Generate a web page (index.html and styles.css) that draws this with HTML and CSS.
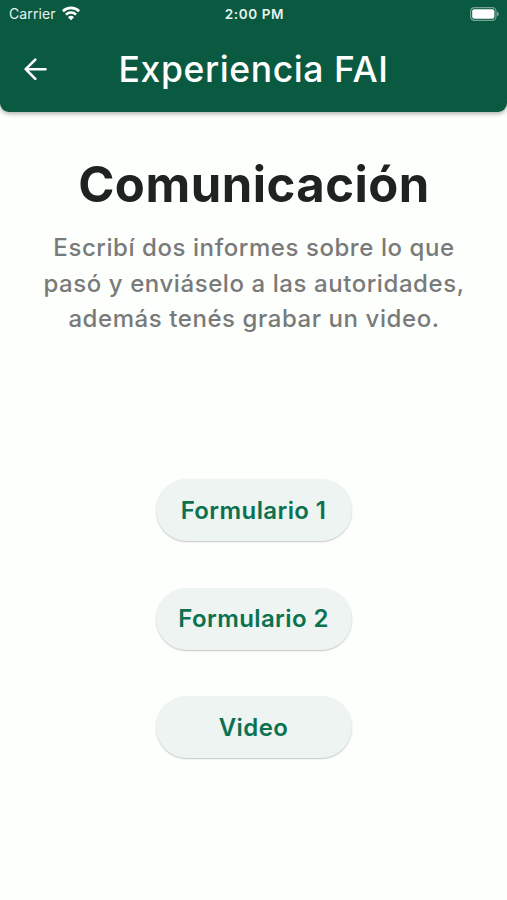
FILE: index.html
```html
<!DOCTYPE html>
<html lang="es">
<head>
    <meta charset="UTF-8">
    <meta name="viewport" content="width=device-width, initial-scale=1.0">
    <title>Experiencia FAI</title>
    <link rel="stylesheet" href="styles.css">
</head>
<body>
    <header class="header">
        <div class="status">
            <div class="carrier">
                <span>Carrier</span>
                <svg class="wifi" viewBox="0 0 20 15" width="20" height="15">
                    <path d="M1.9 5.2a11.7 11.7 0 0 1 16.2 0" fill="none" stroke="#fff" stroke-width="2.7"/>
                    <path d="M4.9 8.6a7.3 7.3 0 0 1 10.2 0" fill="none" stroke="#fff" stroke-width="2.5"/>
                    <path d="M10 14.2l-3-3a4.3 4.3 0 0 1 6 0z" fill="#fff"/>
                </svg>
            </div>
            <div class="time">2:00 PM</div>
            <svg class="battery" viewBox="0 0 30 14" width="30" height="14">
                <rect x="0.6" y="0.6" width="25.4" height="12.8" rx="3.8" fill="none" stroke="#fff" stroke-opacity="0.45" stroke-width="1.2"/>
                <rect x="2.2" y="2.2" width="22.2" height="9.6" rx="2" fill="#fff"/>
                <path d="M27.2 4.8c2.2.7 2.2 3.7 0 4.4z" fill="#fff" fill-opacity="0.5"/>
            </svg>
        </div>
        <div class="bar">
            <svg class="back" viewBox="0 0 23 23" width="23" height="23">
                <path d="M21.5 11.2H2M11.3 1.6L1.7 11.2l9.6 9.6" fill="none" stroke="#fff" stroke-width="2.6" stroke-linecap="round" stroke-linejoin="round"/>
            </svg>
            <div class="title">Experiencia FAI</div>
        </div>
    </header>
    <main class="content">
        <h1>Comunicación</h1>
        <p>Escribí dos informes sobre lo que<br>pasó y enviáselo a las autoridades,<br>además tenés grabar un video.</p>
        <div class="buttons">
            <button type="button">Formulario 1</button>
            <button type="button">Formulario 2</button>
            <button type="button">Video</button>
        </div>
    </main>
</body>
</html>
```
FILE: styles.css
```css
body {
    font-family: Inter, sans-serif;
    background-color: #fcfffc;
    margin: 0;
    height: 900px;
    overflow: hidden;
}
.header {
    height: 112px;
    background-color: #0a5a42;
    color: #fff;
    border-radius: 0 0 9px 9px;
    box-shadow: 0 2px 4px rgba(0, 0, 0, 0.3);
}
.status {
    display: grid;
    grid-template-columns: 1fr auto 1fr;
    align-items: center;
    height: 27px;
    padding: 0 7px 0 9px;
    font-size: 14px;
    color: #e9f2ee;
}
.carrier {
    display: flex;
    align-items: center;
    gap: 5px;
    letter-spacing: 0.1px;
}
.time {
    font-size: 13.5px;
    font-weight: 600;
    letter-spacing: 0.6px;
}
.battery {
    justify-self: end;
}
.bar {
    display: grid;
    grid-template-columns: 1fr auto 1fr;
    align-items: center;
    height: 84px;
}
.back {
    margin-left: 24px;
}
.title {
    font-size: 35.5px;
    font-weight: 500;
    letter-spacing: 0.6px;
}
.content {
    text-align: center;
}
h1 {
    margin: 43px 0 0;
    padding-left: 1px;
    font-size: 49px;
    line-height: 60px;
    letter-spacing: 0.5px;
    color: #202221;
}
p {
    margin: 15px 0 0;
    padding-left: 1px;
    font-size: 24px;
    font-weight: 500;
    line-height: 35.5px;
    letter-spacing: 0.57px;
    color: #797a79;
}
.buttons {
    display: flex;
    flex-direction: column;
    align-items: center;
    gap: 46.5px;
    margin-top: 142.5px;
}
button {
    width: 196px;
    height: 62px;
    padding: 0;
    border: none;
    border-radius: 31px;
    background-color: #edf4f1;
    box-shadow: 0 1px 1.5px rgba(0, 0, 0, 0.22);
    font-family: inherit;
    font-size: 24px;
    font-weight: 600;
    letter-spacing: 0.4px;
    color: #0b7150;
    cursor: pointer;
}
```
